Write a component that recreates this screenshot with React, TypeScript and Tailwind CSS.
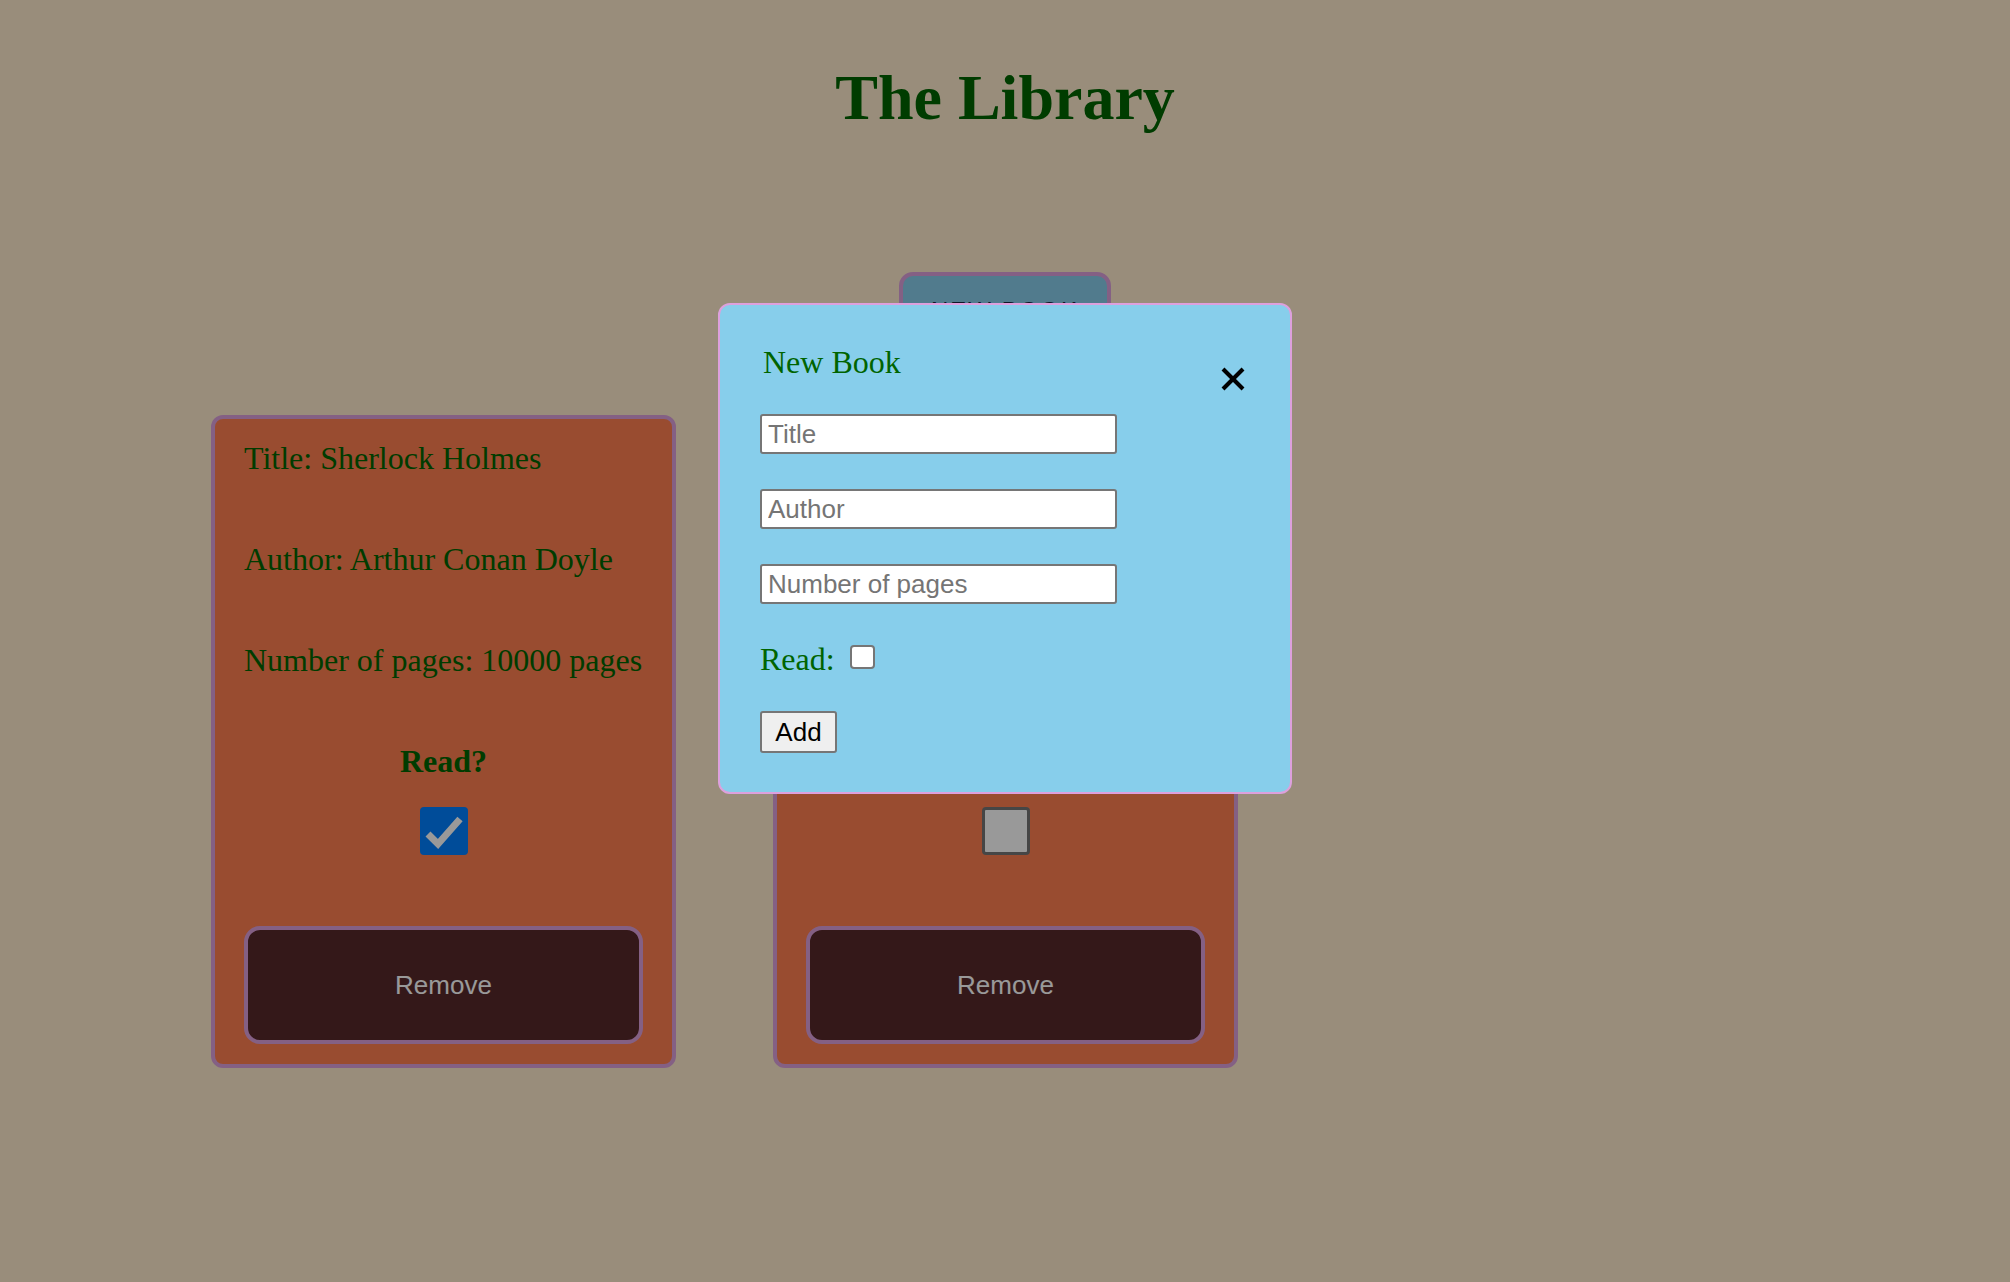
import React, { useState } from 'react';

type Book = {
  title: string;
  author: string;
  pages: number;
  read: boolean;
};

const initialBooks: Book[] = [
  { title: 'Sherlock Holmes', author: 'Arthur Conan Doyle', pages: 10000, read: true },
  { title: 'The Hobbit', author: 'J.R.R. Tolkien', pages: 310, read: false },
];

function CheckBox({ checked, onClick }: { checked: boolean; onClick: () => void }) {
  return (
    <button
      type="button"
      onClick={onClick}
      className={`w-[48px] h-[48px] rounded-[4px] flex items-center justify-center ${
        checked ? 'bg-[#007fff]' : 'bg-white border-[3px] border-[#767676]'
      }`}
    >
      {checked && (
        <svg width="48" height="48" viewBox="0 0 48 48">
          <polyline points="8,27 18,37 40,12" fill="none" stroke="white" strokeWidth="7" />
        </svg>
      )}
    </button>
  );
}

export default function App() {
  const [books, setBooks] = useState<Book[]>(initialBooks);
  const [open, setOpen] = useState(true);

  const toggleRead = (idx: number) => {
    setBooks(prev => prev.map((b, i) => (i === idx ? { ...b, read: !b.read } : b)));
  };

  return (
    <div className="min-h-screen bg-[#ffebcd] font-['Liberation_Serif',serif]">
      <h1 className="pt-[61px] text-center text-[64px] leading-[74px] font-bold text-[#006400]">The Library</h1>

      <div className="flex justify-center mt-[137px]">
        <button
          onClick={() => setOpen(true)}
          className="w-[212px] h-[72px] pt-[21px] flex justify-center items-start bg-[#87ceeb] border-4 border-[#dda0dd] rounded-[14px] font-['Liberation_Sans',sans-serif] text-[24px] leading-[28px] tracking-[2px] text-[#1a2540]"
        >
          NEW BOOK
        </button>
      </div>

      <div className="flex gap-[97px] pl-[211px] mt-[71px]">
        {books.map((book, idx) => (
          <div
            key={idx}
            className="w-[465px] bg-[#ff7f50] border-4 border-[#dda0dd] rounded-[12px] px-[29px] pt-[21px] pb-[20px] text-[32px] leading-[37px] text-[#006400]"
          >
            <div className="flex flex-col gap-[64px]">
              <p>Title: {book.title}</p>
              <p>Author: {book.author}</p>
              <p>Number of pages: {book.pages} pages</p>
              <p className="text-center font-bold">Read?</p>
            </div>
            <div className="flex justify-center mt-[27px]">
              <CheckBox checked={book.read} onClick={() => toggleRead(idx)} />
            </div>
            <button
              onClick={() => setBooks(prev => prev.filter((_, i) => i !== idx))}
              className="mt-[71px] w-full h-[118px] bg-[#58282b] border-4 border-[#dda0dd] rounded-[16px] font-['Liberation_Sans',sans-serif] text-[26px] text-white"
            >
              Remove
            </button>
          </div>
        ))}
      </div>

      {open && (
        <div className="fixed inset-0 bg-black/40 flex justify-center items-start pt-[303px]">
          <div className="w-[574px] bg-[#87ceeb] border-2 border-[#dda0dd] rounded-[12px] pl-[40px] pr-[45px] pt-[39px] pb-[39px]">
            <div className="h-[37px] flex justify-between items-start">
              <h2 className="ml-[3px] text-[32px] leading-[37px] text-[#006400]">New Book</h2>
              <button onClick={() => setOpen(false)} className="mt-[23px]">
                <svg width="24" height="24" viewBox="0 0 24 24" className="block">
                  <line x1="2" y1="2" x2="22" y2="22" stroke="black" strokeWidth="4" />
                  <line x1="22" y1="2" x2="2" y2="22" stroke="black" strokeWidth="4" />
                </svg>
              </button>
            </div>

            <div className="mt-[33px] flex flex-col gap-[35px] font-['Liberation_Sans',sans-serif]">
              {['Title', 'Author', 'Number of pages'].map(ph => (
                <input
                  key={ph}
                  type="text"
                  placeholder={ph}
                  className="w-[357px] h-[40px] bg-white border-2 border-[#767676] rounded-[3px] pl-[6px] text-[26px] text-black placeholder:text-[#757575] outline-none"
                />
              ))}
            </div>

            <div className="mt-[37px] flex items-start gap-[15px] text-[32px] leading-[37px] text-[#006400]">
              <span>Read:</span>
              <span className="mt-[4px] w-[25px] h-[24px] bg-white border-2 border-[#767676] rounded-[4px]" />
            </div>

            <button className="mt-[33px] w-[77px] h-[42px] bg-[#efefef] border-2 border-[#767676] rounded-[3px] font-['Liberation_Sans',sans-serif] text-[26px] text-black">
              Add
            </button>
          </div>
        </div>
      )}
    </div>
  );
}
